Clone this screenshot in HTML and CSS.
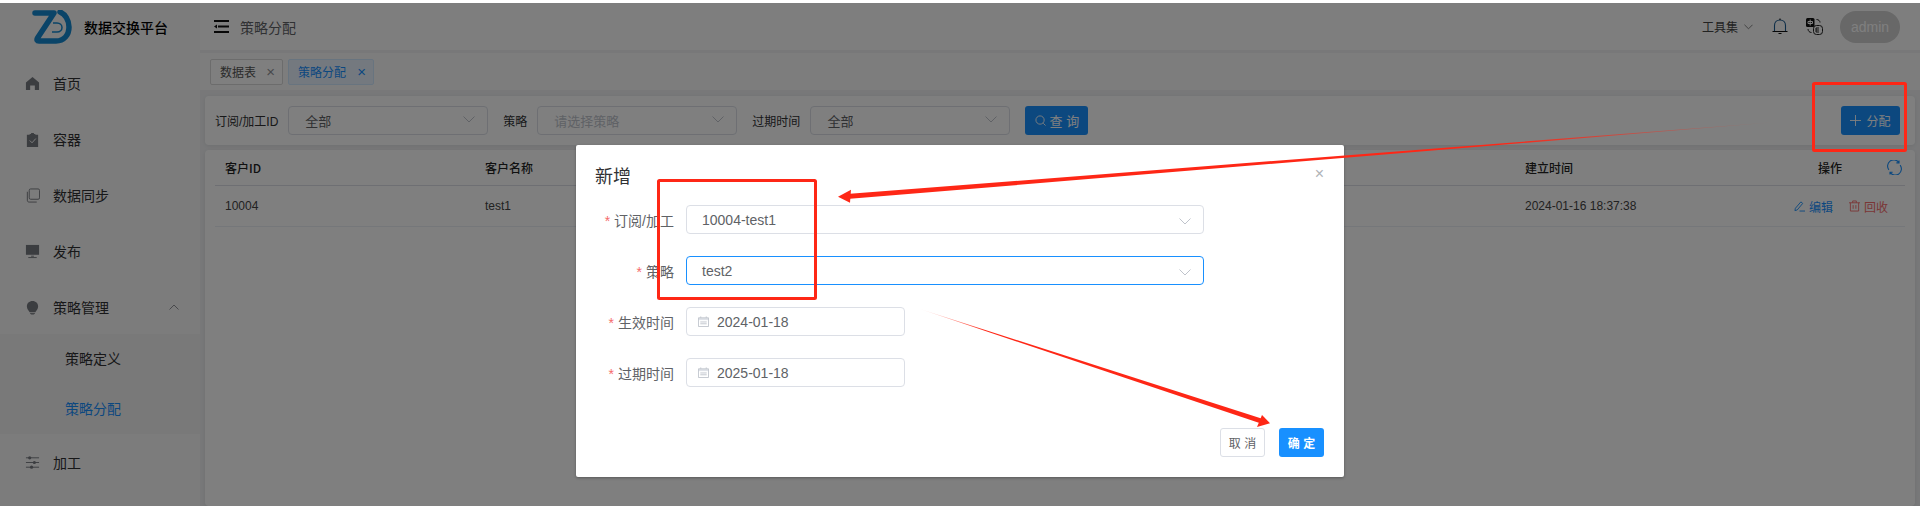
FILE: index.html
```html
<!DOCTYPE html>
<html lang="zh">
<head>
<meta charset="utf-8">
<title>策略分配</title>
<link rel="stylesheet" href="styles.css">
</head>
<body>
<div class="app">
  <aside class="sidebar">
    <div class="brand">
      <svg class="logo" viewBox="0 0 40 34"><path class="logo-main" d="M3 3H22L5.500 28C4.500 30 5 31 7 31H24C32 31 37 25 37 17C37 10 33 4 28 2"/><path class="logo-inner" d="M21 13H25C28 13 30 15 30 17.500C30 20 28 22 25 22H20"/></svg>
      <span class="brand-name">数据交换平台</span>
    </div>
    <nav class="menu">
      <div class="menu-item"><svg class="menu-icon" viewBox="0 0 16 16"><path d="M8 1L1 7V15H5.500V10H10.500V15H15V7Z"/></svg><span>首页</span></div>
      <div class="menu-item"><svg class="menu-icon" viewBox="0 0 16 16"><path d="M2 3H5V2H6.500V1H9.500V2H11V3H14V16H2Z"/><path fill="none" stroke="#fff" stroke-width="1" d="M5 9L7.500 11.500L11.500 7"/></svg><span>容器</span></div>
      <div class="menu-item"><svg class="menu-icon line" viewBox="0 0 16 16"><rect x="4.500" y="1" width="11" height="11" rx="1.500"/><path d="M2.500 4V13C2.500 14.200 3 15 4.500 15H12.500"/></svg><span>数据同步</span></div>
      <div class="menu-item"><svg class="menu-icon" viewBox="0 0 16 16"><rect x="1" y="1" width="14" height="10.500"/><rect x="6.500" y="12.500" width="3" height="1"/><rect x="3.500" y="14" width="9" height="1"/></svg><span>发布</span></div>
      <div class="menu-item"><svg class="menu-icon" viewBox="0 0 16 16"><path d="M8 1C4.500 1 2 3.500 2 6.800C2 9.500 4 11 5 13H11C12 11 14 9.500 14 6.800C14 3.500 11.500 1 8 1Z"/><rect x="5.500" y="14" width="5" height="1"/><rect x="6.500" y="15.500" width="3" height=".8"/></svg><span>策略管理</span><svg class="menu-arrow" viewBox="0 0 10 6"><path d="M.5 5.500L5 1L9.500 5.500"/></svg></div>
      <div class="submenu">
        <div class="sub-item">策略定义</div>
        <div class="sub-item active">策略分配</div>
      </div>
      <div class="menu-item"><svg class="menu-icon" viewBox="0 0 16 16"><rect x="1" y="2.500" width="14" height="1"/><rect x="1" y="7.500" width="14" height="1"/><rect x="1" y="12.500" width="14" height="1"/><circle cx="5" cy="3" r="1.700"/><circle cx="10" cy="8" r="1.700"/><circle cx="7" cy="13" r="1.700"/></svg><span>加工</span></div>
    </nav>
  </aside>

  <main class="main">
    <header class="topbar">
      <svg class="hamburger" viewBox="0 0 15 13"><path d="M0 0H15V2H0ZM4 5.500H15V7.500H4ZM0 11H15V13H0ZM0 6.500L3 4.500V8.500Z"/></svg>
      <span class="crumb">策略分配</span>
      <div class="top-right">
        <span class="tools">工具集</span>
        <svg class="tools-arrow" viewBox="0 0 10 6"><path d="M.5 .5L5 5L9.500 .5"/></svg>
        <svg class="bell" viewBox="0 0 16 17"><path class="bell-dome" d="M2.500 13V7.500C2.500 4 5 2 8 2C11 2 13.500 4 13.500 7.500V13"/><path d="M.5 13.500H15.500M8 .5V2M6.500 15.500H9.500"/></svg>
        <svg class="translate" viewBox="0 0 17 17"><rect x="0" y="0" width="8.500" height="9" rx="1.500"/><path class="tr-line" d="M2 3.500H6.500M4.200 1.500V7.500M2 3.500V5.500H6.500V3.500"/><path class="tr-out" d="M10.500 1.500C12.500 1.500 14 2.800 14 4.500M2 11C2 13 3.500 14.500 5.500 14.500"/><rect class="tr-out" x="7.500" y="7.500" width="9" height="9" rx="3"/><path class="tr-out" d="M10 10H13M10 12H13M10 14H13M10 10V14"/></svg>
        <span class="avatar">admin</span>
      </div>
    </header>

    <div class="tabs">
      <div class="tab"><span>数据表</span><span class="tab-x">×</span></div>
      <div class="tab current"><span>策略分配</span><span class="tab-x">×</span></div>
    </div>

    <section class="filter card">
      <label class="filter-label">订阅/加工ID</label>
      <div class="fselect"><span>全部</span><svg class="chev" viewBox="0 0 12 7"><path d="M.5 .5L6 6L11.500 .5"/></svg></div>
      <label class="filter-label">策略</label>
      <div class="fselect"><span class="ph">请选择策略</span><svg class="chev" viewBox="0 0 12 7"><path d="M.5 .5L6 6L11.500 .5"/></svg></div>
      <label class="filter-label">过期时间</label>
      <div class="fselect"><span>全部</span><svg class="chev" viewBox="0 0 12 7"><path d="M.5 .5L6 6L11.500 .5"/></svg></div>
      <button class="btn-primary query"><svg class="btn-icon" viewBox="0 0 12 12"><circle cx="5.500" cy="5.500" r="4.500"/><path d="M9 9L11.500 11.500"/></svg>查 询</button>
      <button class="btn-primary assign"><svg class="btn-icon" viewBox="0 0 12 12"><path d="M6 0V12M0 6H12"/></svg>分配</button>
    </section>

    <section class="table card">
      <div class="row head">
        <div class="c1">客户ID</div>
        <div class="c2">客户名称</div>
        <div class="c3">建立时间</div>
        <div class="c4 head-ops"><span>操作</span><svg class="refresh" viewBox="0 0 16 16"><path d="M2 10.500A6.500 6.500 0 0 1 12.500 2.500M14 5.500A6.500 6.500 0 0 1 3.500 13.500M12.800 .5V3H10M3.200 15.500V13H6"/></svg></div>
      </div>
      <div class="row">
        <div class="c1">10004</div>
        <div class="c2">test1</div>
        <div class="c3">2024-01-16 18:37:38</div>
        <div class="c4 ops">
          <span class="op edit"><svg class="op-icon" viewBox="0 0 12 12"><path d="M1.500 8.500L7.500 1.500L9.500 3.200L3.500 10.300L1 11ZM6 11.500H12"/></svg>编辑</span>
          <span class="op del"><svg class="op-icon" viewBox="0 0 12 12"><path d="M0 2.500H12M4 2.500V.5H8V2.500M1.500 2.500V11.500H10.500V2.500M4.500 5V9M7.500 5V9"/></svg>回收</span>
        </div>
      </div>
    </section>
  </main>
</div>

<div class="overlay">
  <div class="modal">
    <div class="modal-head"><h2>新增</h2><span class="modal-x">×</span></div>
    <form class="form">
      <div class="form-row"><label class="req">订阅/加工</label><div class="input wide"><span class="sel-text">10004-test1</span><svg class="chev" viewBox="0 0 12 7"><path d="M.5 .5L6 6L11.500 .5"/></svg></div></div>
      <div class="form-row"><label class="req">策略</label><div class="input wide focus"><span class="sel-text">test2</span><svg class="chev" viewBox="0 0 12 7"><path d="M.5 .5L6 6L11.500 .5"/></svg></div></div>
      <div class="form-row"><label class="req">生效时间</label><div class="input date"><svg class="cal" viewBox="0 0 12 12"><path class="cal-top" d="M.5 2H11.500V4.500H.5Z"/><path d="M.5 2H11.500V11.500H.5ZM3 .5V2M9 .5V2M2.500 6.500H9.500M2.500 8.500H9.500"/></svg><span>2024-01-18</span></div></div>
      <div class="form-row"><label class="req">过期时间</label><div class="input date"><svg class="cal" viewBox="0 0 12 12"><path class="cal-top" d="M.5 2H11.500V4.500H.5Z"/><path d="M.5 2H11.500V11.500H.5ZM3 .5V2M9 .5V2M2.500 6.500H9.500M2.500 8.500H9.500"/></svg><span>2025-01-18</span></div></div>
    </form>
    <div class="modal-foot">
      <button class="btn-cancel">取 消</button>
      <button class="btn-ok">确 定</button>
    </div>
  </div>
</div>

<svg class="annot" viewBox="0 0 1920 506">
  <defs>
    <linearGradient id="fade1" gradientUnits="userSpaceOnUse" x1="1790" y1="121" x2="1500" y2="144"><stop offset="0" stop-color="#fe2716" stop-opacity="0"/><stop offset="1" stop-color="#fe2716"/></linearGradient>
    <linearGradient id="fade2" gradientUnits="userSpaceOnUse" x1="917" y1="308" x2="985" y2="330"><stop offset="0" stop-color="#fe2716" stop-opacity="0"/><stop offset="1" stop-color="#fe2716"/></linearGradient>
  </defs>
  <rect class="mark" x="658.500" y="180.500" width="157" height="118" rx="1"/>
  <rect class="mark" x="1813.500" y="83.500" width="92" height="67" rx="1"/>
  <polygon fill="url(#fade1)" points="1790,121 850,193.800 850,198.800"/>
  <polygon class="head" points="838,196.700 851,189.800 850,202.800"/>
  <polygon fill="url(#fade2)" points="917,308 1263,419 1261,423.500"/>
  <polygon class="head" points="1270,423.300 1262,415 1257,427"/>
</svg>
</body>
</html>
```

FILE: styles.css
```css
* { box-sizing: border-box; }
html, body { margin: 0; height: 100%; }
body {
  position: relative;
  height: 506px;
  overflow: hidden;
  padding-top: 3px;
  background: #fff;
  font-family: "Liberation Sans", "Noto Sans CJK SC", sans-serif;
  font-size: 12px;
  color: #303133;
}
svg { display: block; flex: none; }

.app { display: flex; height: 503px; background: #f0f1f3; }

/* sidebar */
.sidebar { width: 200px; flex: none; background: #f8f8f8; }
.brand { display: flex; align-items: center; height: 52px; padding: 0 0 5px 32px; }
.logo { width: 40px; height: 34px; }
.logo-main { fill: none; stroke: #1488d0; stroke-width: 5.500; stroke-linejoin: round; stroke-linecap: round; }
.logo-inner { fill: none; stroke: #1488d0; stroke-width: 1.500; }
.brand-name { margin-left: 12px; font-size: 14px; color: #000; font-weight: 500; }
.menu-item { display: flex; align-items: center; height: 56px; padding-left: 25px; font-size: 14px; color: #303133; }
.menu-item span { margin-left: 13px; }
.menu-icon { width: 15px; height: 15px; fill: #777a80; }
.menu-icon.line { fill: none; stroke: #777a80; stroke-width: 1; }
.menu-arrow { width: 10px; height: 6px; margin-left: auto; margin-right: 21px; fill: none; stroke: #909399; stroke-width: 1; }
.submenu { background: #f2f2f2; margin-top: -1px; }
.sub-item { height: 50px; line-height: 50px; padding-left: 65px; font-size: 14px; color: #303133; }
.sub-item.active { color: #1890ff; }

/* main */
.main { flex: 1; min-width: 0; display: flex; flex-direction: column; padding: 0 5px 0 0; }
.topbar { display: flex; align-items: center; height: 47px; margin-right: -5px; padding: 0 20px 0 14px; background: #fdfdfd; }
.hamburger { width: 15px; height: 13px; fill: #111; }
.crumb { margin-left: 11px; font-size: 14px; color: #606266; }
.top-right { display: flex; align-items: center; margin-left: auto; }
.tools { color: #444; font-size: 12px; }
.tools-arrow { width: 9px; height: 6px; margin-left: 6px; fill: none; stroke: #777; stroke-width: 1; }
.bell { width: 16px; height: 17px; margin-left: 19px; fill: none; stroke: #111; stroke-width: 1.100; }
.bell-dome { stroke: #1a5a90; }
.translate { width: 17px; height: 17px; margin-left: 18px; fill: #111; }
.tr-line { fill: none; stroke: #fff; stroke-width: 1; }
.tr-out { fill: none; stroke: #222; stroke-width: 1; }
.avatar { display: block; width: 60px; height: 32px; margin-left: 17px; border-radius: 16px; background: #d0d0d0; color: #fff; text-align: center; line-height: 32px; font-size: 14px; }

.tabs { display: flex; gap: 5px; align-items: center; height: 37px; margin: 3px -5px 0 0; padding-left: 10px; background: #fbfbfb; }
.tab { display: flex; align-items: center; justify-content: space-between; width: 73px; height: 26px; padding: 0 7px 0 9px; border: 1px solid #d9d9d9; border-radius: 2px; color: #555; font-size: 12px; background: #fff; }
.tab.current { width: 86px; background: #e8f3ff; border-color: #d1e9ff; color: #1890ff; }
.tab-x { font-size: 15px; color: #909399; line-height: 1; }
.tab.current .tab-x { color: #1890ff; }

.card { background: #fff; border-radius: 4px; margin-left: 5px; box-shadow: 0 1px 4px rgba(0,0,0,.08); }
.filter { display: flex; align-items: center; height: 49px; margin-top: 6px; padding: 0 15px 0 10px; }
.filter-label { margin-right: 10px; font-size: 12px; color: #303133; }
.fselect { display: flex; align-items: center; justify-content: space-between; width: 200px; height: 29px; margin-right: 15px; padding: 0 12px 0 16px; border: 1px solid #dcdfe6; border-radius: 4px; font-size: 13px; color: #606266; }
.fselect .ph { color: #c0c4cc; }
.chev { width: 12px; height: 7px; fill: none; stroke: #c0c4cc; stroke-width: 1; }
.fselect .chev { margin-bottom: 3px; }
.input .chev { margin-top: 3px; }
.btn-primary { display: flex; align-items: center; justify-content: center; gap: 4px; height: 29px; border: 0; border-radius: 3px; background: #1890ff; color: #fff; font: 13px "Liberation Sans", "Noto Sans CJK SC", sans-serif; }
.btn-icon { width: 11px; height: 11px; fill: none; stroke: #fff; stroke-width: 1; }
.query { width: 63px; margin-left: 0; }
.assign { width: 59px; margin-left: auto; gap: 5px; font-size: 12px; }

.table { flex: 1; margin-top: 5px; padding: 0 10px; }
.row { display: flex; align-items: center; height: 41px; border-bottom: 1px solid #ebeef5; color: #444; font-size: 12px; }
.row.head { height: 36px; color: #222; font-family: "Noto Sans CJK SC", sans-serif; font-weight: 500; font-size: 12px; border-bottom-color: #dcdfe6; }
.c1 { width: 260px; padding-left: 10px; }
.c2 { width: 1040px; padding-left: 10px; }
.c3 { width: 270px; padding-left: 10px; }
.c4 { flex: 1; }
.head-ops { display: flex; align-items: center; padding: 0 3px 0 33px; }
.refresh { width: 15px; height: 15px; margin-left: auto; fill: none; stroke: #1890ff; stroke-width: 1.200; }
.ops { display: flex; gap: 16px; padding-left: 9px; }
.op { display: flex; align-items: center; gap: 4px; }
.edit { color: #1890ff; }
.del { color: #f56c6c; }
.op-icon { width: 11px; height: 12px; fill: none; stroke-width: 1; stroke: currentColor; }

/* overlay and dialog */
.overlay { position: absolute; inset: 3px 0 0 0; display: flex; justify-content: center; padding-top: 142px; background: rgba(0,0,0,.5); }
.modal { display: flex; flex-direction: column; width: 768px; height: 332px; background: #fff; border-radius: 2px; box-shadow: 0 1px 3px rgba(0,0,0,.3); }
.modal-head { display: flex; justify-content: space-between; height: 60px; padding: 19px 20px 0 19px; }
.modal-head h2 { margin: 0; font-size: 18px; font-weight: 400; line-height: 26px; color: #303133; }
.modal-x { font-size: 16px; line-height: 20px; color: #b0b3b8; }
.form { display: flex; flex-direction: column; gap: 22px; }
.form-row { display: flex; align-items: center; height: 29px; }
.form-row label { width: 98px; margin-right: 12px; text-align: right; font-size: 14px; color: #606266; }
.req::before { content: "*"; margin-right: 4px; color: #f56c6c; }
.input { display: flex; align-items: center; height: 29px; border: 1px solid #dcdfe6; border-radius: 4px; font-size: 14px; color: #606266; }
.input.wide { width: 518px; justify-content: space-between; padding: 0 12px 0 15px; }
.input.focus { border-color: #1890ff; }
.input.date { width: 219px; padding-left: 11px; }
.cal { width: 11px; height: 11px; margin-right: 8px; fill: none; stroke: #c0c4cc; stroke-width: 1; }
.cal-top { fill: #dfe2e8; stroke: none; }
.modal-foot { display: flex; justify-content: flex-end; gap: 14px; margin-top: auto; padding: 0 20px 20px 0; }
.btn-cancel, .btn-ok { width: 45px; height: 29px; padding: 0; border-radius: 3px; font: 12px "Liberation Sans", "Noto Sans CJK SC", sans-serif; }
.btn-cancel { background: #fff; border: 1px solid #dcdfe6; color: #606266; }
.btn-ok { background: #1890ff; border: 0; color: #fff; font-weight: 700; }

/* screenshot annotations */
.annot { position: absolute; inset: 0; width: 1920px; height: 506px; pointer-events: none; }
.mark { fill: none; stroke: #fe2716; stroke-width: 3; }
.head { fill: #fe2716; }
```
